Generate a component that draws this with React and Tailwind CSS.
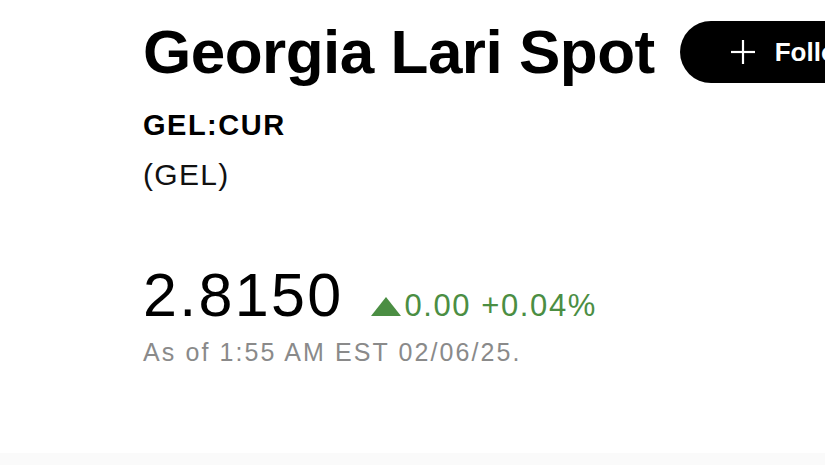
import React from "react";

export default function App() {
  return (
    <div className="w-[825px] h-[465px] overflow-hidden bg-white flex flex-col font-['Liberation_Sans',Arial,sans-serif]">
      <div className="pl-[143px] pt-[20px] flex-1">
        <div className="flex items-center gap-[25px] whitespace-nowrap">
          <h1 className="font-bold text-[62px] leading-[64px] tracking-[-0.5px] text-black">
            Georgia Lari Spot
          </h1>
          <button className="h-[62px] shrink-0 rounded-full bg-black text-white flex items-center pl-[50px] pr-[40px] gap-[19px]">
            <svg width="26" height="26" viewBox="0 0 26 26" fill="none" stroke="white" strokeWidth="2.2">
              <line x1="13" y1="1" x2="13" y2="25" />
              <line x1="1" y1="13" x2="25" y2="13" />
            </svg>
            <span className="font-bold text-[26px] leading-none">Follow</span>
          </button>
        </div>
        <div className="mt-[25px] text-[29px] leading-[32px] font-bold tracking-[1.5px] text-black">GEL:CUR</div>
        <div className="mt-[18px] text-[30px] leading-[32px] tracking-[1.3px] text-[#111]">(GEL)</div>
        <div className="mt-[74px] flex items-baseline gap-[28px] whitespace-nowrap">
          <span className="text-[61px] leading-[60px] tracking-[2.3px] text-black">2.8150</span>
          <span className="flex items-baseline text-[31px] leading-[32px] tracking-[1.6px] text-[#4b8e43]">
            <svg width="30" height="19" viewBox="0 0 30 19" className="mr-[3px] self-baseline">
              <polygon points="15,0 30,19 0,19" fill="#4b8e43" />
            </svg>
            0.00 +0.04%
          </span>
        </div>
        <div className="mt-[13px] text-[25px] leading-[28px] tracking-[2.1px] text-[#8a8a8a] whitespace-nowrap">As of 1:55 AM EST 02/06/25.</div>
      </div>
      <div className="h-[12px] bg-[#fafafa]" />
    </div>
  );
}
